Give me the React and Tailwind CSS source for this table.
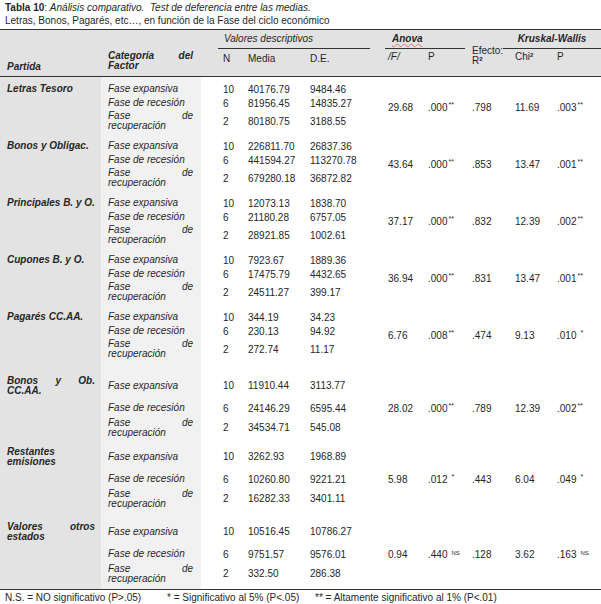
const COLS = 'grid grid-cols-[101px_100px_43px_61px_75px_44px_42px_37px_47px_1fr]';

const groups = [
  {name: ['Letras Tesoro'], rows: [['10', '40176.79', '9484.46'], ['6', '81956.45', '14835.27'], ['2', '80180.75', '3188.55']], stats: ['29.68', ['.000', '**'], '.798', '11.69', ['.003', '**']]},
  {name: ['Bonos y Obligac.'], rows: [['10', '226811.70', '26837.36'], ['6', '441594.27', '113270.78'], ['2', '679280.18', '36872.82']], stats: ['43.64', ['.000', '**'], '.853', '13.47', ['.001', '**']]},
  {name: ['Principales B. y O.'], rows: [['10', '12073.13', '1838.70'], ['6', '21180.28', '6757.05'], ['2', '28921.85', '1002.61']], stats: ['37.17', ['.000', '**'], '.832', '12.39', ['.002', '**']]},
  {name: ['Cupones B. y O.'], rows: [['10', '7923.67', '1889.36'], ['6', '17475.79', '4432.65'], ['2', '24511.27', '399.17']], stats: ['36.94', ['.000', '**'], '.831', '13.47', ['.001', '**']]},
  {name: ['Pagarés CC.AA.'], rows: [['10', '344.19', '34.23'], ['6', '230.13', '94.92'], ['2', '272.74', '11.17']], stats: ['6.76', ['.008', '**'], '.474', '9.13', ['.010', '*']]},
  {name: [['Bonos', 'y', 'Ob.'], 'CC.AA.'], tall: true, pad: 'pt-[12px] pb-[0px]', rows: [['10', '11910.44', '3113.77'], ['6', '24146.29', '6595.44'], ['2', '34534.71', '545.08']], stats: ['28.02', ['.000', '**'], '.789', '12.39', ['.002', '**']]},
  {name: ['Restantes', 'emisiones'], tall: true, pad: 'pt-[9px] pb-[0px]', rows: [['10', '3262.93', '1968.89'], ['6', '10260.80', '9221.21'], ['2', '16282.33', '3401.11']], stats: ['5.98', ['.012', '*'], '.443', '6.04', ['.049', '*']]},
  {name: [['Valores', 'otros'], 'estados'], tall: true, pad: 'pt-[13px] pb-[7px]', rows: [['10', '10516.45', '10786.27'], ['6', '9751.57', '9576.01'], ['2', '332.50', '286.38']], stats: ['0.94', ['.440', 'NS'], '.128', '3.62', ['.163', 'NS']]},
];

const phases = ['Fase expansiva', 'Fase de recesión', null];
const rowStart = ['row-start-1', 'row-start-2', 'row-start-3'];

const PValue = ({v}) => {
  if (!Array.isArray(v)) return v;
  if (v[1] === 'NS') {
    return (
      <>
        {v[0]}
        <sup className="text-[6px] ml-[4px]">NS</sup>
      </>
    );
  }
  return (
    <>
      {v[0]}
      <sup className={`text-[7px] ${v[1] === '*' ? 'ml-[4px]' : 'ml-[1px]'}`}>{v[1]}</sup>
    </>
  );
};

const PartidaName = ({name}) => {
  if (name === 'Bonos y Obligac.') {
    return (
      <div className="whitespace-nowrap">
        Bonos y Obli<span className="underline decoration-dotted decoration-[#e04040]">g</span>ac.
      </div>
    );
  }
  return <div className="whitespace-nowrap">{name}</div>;
};

const Group = ({g}) => {
  const rowsClass = g.tall ? `grid-rows-[23px_22px_17px] ${g.pad}` : 'grid-rows-[14px_14px_22px] pt-[5px] pb-[2px]';
  const statRow = g.tall ? 'row-start-2' : 'row-start-1 row-span-3';
  return (
    <div className={`${COLS} ${rowsClass}`}>
      {/* Partida */}
      <div className="col-start-1 row-start-1 pl-[7px] pr-[6px] flex flex-col justify-center font-bold italic leading-[10px]">
        {g.name.map((line, i) =>
          Array.isArray(line) ? (
            <div key={i} className="flex justify-between">
              {line.map((w) => (
                <span key={w}>{w}</span>
              ))}
            </div>
          ) : (
            <PartidaName key={i} name={line} />
          )
        )}
      </div>

      {g.rows.map((r, i) => (
        <div key={i} className="contents">
          <div className={`col-start-2 pl-[7px] pr-[8px] flex flex-col justify-center italic leading-[10px] ${rowStart[i]}`}>
            {phases[i] ? (
              <span className="whitespace-nowrap">{phases[i]}</span>
            ) : (
              <>
                <div className="flex justify-between">
                  <span>Fase</span>
                  <span>de</span>
                </div>
                <span>recuperación</span>
              </>
            )}
          </div>
          <div className={`col-start-3 pl-[22px] flex items-center ${rowStart[i]}`}>{r[0]}</div>
          <div className={`col-start-4 pl-[4px] flex items-center ${rowStart[i]}`}>{r[1]}</div>
          <div className={`col-start-5 pl-[5px] flex items-center ${rowStart[i]}`}>{r[2]}</div>
        </div>
      ))}

      {/* Anova / efecto / Kruskal-Wallis */}
      <div className={`col-start-6 pl-[8px] flex items-center ${statRow}`}>{g.stats[0]}</div>
      <div className={`col-start-7 pl-[4px] flex items-center whitespace-nowrap ${statRow}`}>
        <span>
          <PValue v={g.stats[1]} />
        </span>
      </div>
      <div className={`col-start-8 pl-[6px] flex items-center ${statRow}`}>{g.stats[2]}</div>
      <div className={`col-start-9 pl-[12px] flex items-center ${statRow}`}>{g.stats[3]}</div>
      <div className={`col-start-10 pl-[7px] flex items-center whitespace-nowrap ${statRow}`}>
        <span>
          <PValue v={g.stats[4]} />
        </span>
      </div>
    </div>
  );
};

export default function App() {
  return (
    <div className="w-[601px] h-[604px] overflow-hidden bg-white text-[#262626] text-[10px] font-['Liberation_Sans',Arial,sans-serif]">
      {/* Title */}
      <div className="pt-[1px] pl-[5px] leading-[13px] mb-[2px] whitespace-nowrap">
        <div>
          <span className="font-bold">Tabla 10</span>: <span className="italic">Análisis comparativo.&nbsp; Test de deferencia entre las medias.</span>
        </div>
        <div>Letras, Bonos, Pagarés, etc…, en función de la Fase del ciclo económico</div>
      </div>

      {/* Header */}
      <div className={`${COLS} grid-rows-[19px_27px] bg-[#e2e2e2] border-y border-[#333] leading-[10px]`}>
        <div className="col-start-1 row-start-1 row-span-2 pl-[7px] pb-[4px] flex items-end font-bold italic">Partida</div>
        <div className="col-start-2 row-start-1 row-span-2 pl-[7px] pr-[8px] pb-[5px] flex flex-col justify-end font-bold italic">
          <div className="flex justify-between">
            <span>Categoría</span>
            <span>del</span>
          </div>
          <span>Factor</span>
        </div>
        <div className="col-start-3 col-span-3 row-start-1 ml-[17px] mr-[10px] pl-[6px] border-b border-[#333] flex items-center italic">Valores descriptivos</div>
        <div className="col-start-6 col-span-2 row-start-1 ml-[5px] mr-[1px] pl-[7px] border-b border-[#333] flex items-center">
          <span className="font-bold italic underline decoration-wavy decoration-[#e87070] decoration-1 underline-offset-1">Anova</span>
        </div>
        <div className="col-start-8 row-start-1 row-span-2 pl-[6px] pb-[10px] flex flex-col justify-end whitespace-nowrap">
          <span>Efecto:</span>
          <span>
            R<sup className="text-[6px] font-bold">2</sup>
          </span>
        </div>
        <div className="col-start-9 col-span-2 row-start-1 border-b border-[#333] flex items-center justify-center font-bold italic">Kruskal-Wallis</div>

        <div className="col-start-3 row-start-2 pl-[22px] pt-[5px]">N</div>
        <div className="col-start-4 row-start-2 pl-[4px] pt-[5px]">Media</div>
        <div className="col-start-5 row-start-2 pl-[5px] pt-[5px]">D.E.</div>
        <div className="col-start-6 row-start-2 pl-[8px] pt-[3px] italic">/F/</div>
        <div className="col-start-7 row-start-2 pl-[4px] pt-[3px]">P</div>
        <div className="col-start-9 row-start-2 pl-[12px] pt-[3px]">
          Chi<sup className="text-[6px] font-bold">2</sup>
        </div>
        <div className="col-start-10 row-start-2 pl-[7px] pt-[3px]">P</div>
      </div>

      {/* Body */}
      <div className="bg-[linear-gradient(to_right,#e3e3e3_0_101px,#f1f1f1_101px_201px,#ffffff_201px)] border-b border-[#333]">
        {groups.map((g, i) => (
          <Group key={i} g={g} />
        ))}
      </div>

      {/* Footer */}
      <div className="pl-[5px] pt-[2px] leading-[12px] flex whitespace-nowrap">
        <span className="w-[162px]">N.S. = NO significativo (P&gt;.05)</span>
        <span className="w-[148px]">* = Significativo al 5% (P&lt;.05)</span>
        <span>** = Altamente significativo al 1% (P&lt;.01)</span>
      </div>
    </div>
  );
}
